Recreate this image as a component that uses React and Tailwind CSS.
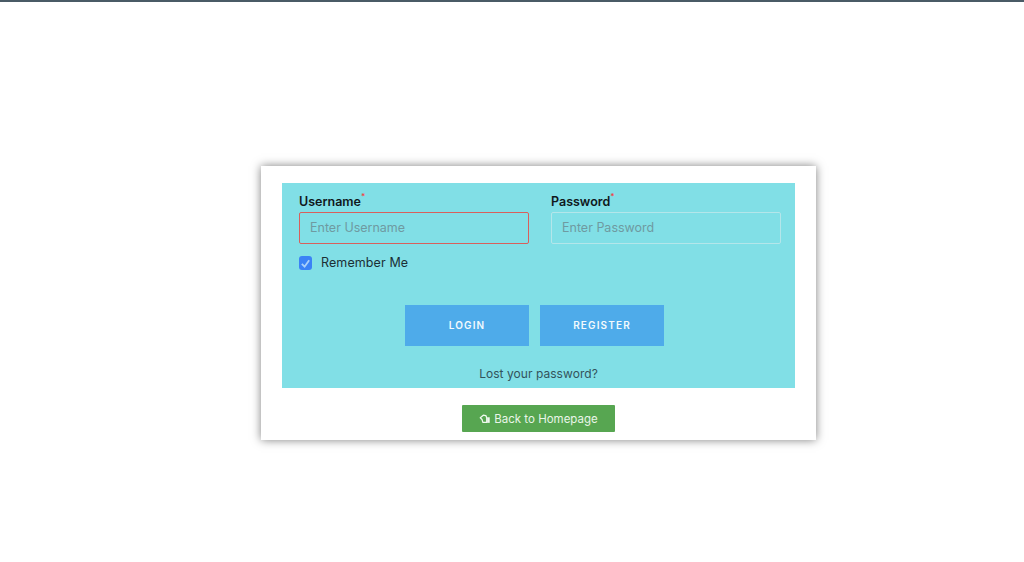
import React from "react";

function Field({ label, placeholder, error, type = "text" }) {
  return (
    <div className="flex w-[230px] shrink-0 flex-col">
      <label className="flex h-[20px] items-center pt-[1px] text-[12.5px] leading-[20px] font-semibold text-[#10181c]">
        {label}
        <span className="relative -top-[6px] text-[8px] leading-none text-[#ef4444]">*</span>
      </label>
      <input
        type={type}
        placeholder={placeholder}
        className={`mt-[1px] h-[32px] w-full rounded-[2px] border bg-transparent px-[10px] pb-[1px] text-[12.5px] text-[#333] outline-none placeholder:text-[#6f9aa1] ${error ? "border-[#d8605c]" : "border-[#b4e6ea]"}`}
      />
    </div>
  );
}

export default function App() {
  return (
    <div className="h-[562px] overflow-hidden bg-white font-['Inter','Liberation_Sans',sans-serif]">
      <div className="h-[2px] bg-[#4a5b66]" />
      <div className="mt-[164px] ml-[261px] flex h-[274px] w-[555px] flex-col items-center bg-white px-[21px] pt-[17px] shadow-[0_0_9px_rgba(0,0,0,0.5)]">
        <form className="flex h-[205px] w-[513px] flex-col bg-[#81dfe6] px-[17px] pt-[8px]">
          <div className="-mr-[3px] flex gap-[22px]">
            <Field label="Username" placeholder="Enter Username" error />
            <Field label="Password" placeholder="Enter Password" type="password" />
          </div>
          <label className="mt-[11px] flex h-[16px] items-center gap-[9px] text-[12.5px] tracking-[0.1px] text-[#1c2f35]">
            <span className="flex h-[14px] w-[13px] items-center justify-center rounded-[3px] bg-[#3b82f6]">
              <svg viewBox="0 0 12 12" className="h-[11px] w-[11px]" fill="none" stroke="#a9cffa" strokeWidth="2">
                <path d="M2 6.5 5 9.5 10 2.5" />
              </svg>
            </span>
            Remember Me
          </label>
          <div className="mt-[34px] flex justify-center gap-[11px] pr-[8px]">
            <button type="button" className="h-[41px] w-[124px] bg-[#4eabea] text-[10px] font-semibold tracking-[1.15px] text-[#f2fafd]">LOGIN</button>
            <button type="button" className="h-[41px] w-[124px] bg-[#4eabea] text-[10px] font-semibold tracking-[1.15px] text-[#f2fafd]">REGISTER</button>
          </div>
          <div className="mt-[19px] text-center text-[12px] leading-[18px] tracking-[0.05px] text-[#33535b]">Lost your password?</div>
        </form>
        <button type="button" className="mt-[17px] flex h-[27px] w-[153px] items-center justify-center gap-[3px] rounded-[1px] bg-[#57a651] pt-[2px] text-[11.5px] text-[#e9f5e8]">
          <svg viewBox="0 0 14 14" className="-mt-[2px] h-[12px] w-[12px]">
            <path d="M1.5 5.5 5 2.5 8 3 9 5.5 9 11 4.5 11 3.5 7.5Z" fill="none" stroke="#f0f8ef" strokeWidth="1.5" strokeLinejoin="round" />
            <path d="M9.5 5h3v6.5h-3z" fill="#f0f8ef" />
          </svg>
          Back to Homepage
        </button>
      </div>
    </div>
  );
}
